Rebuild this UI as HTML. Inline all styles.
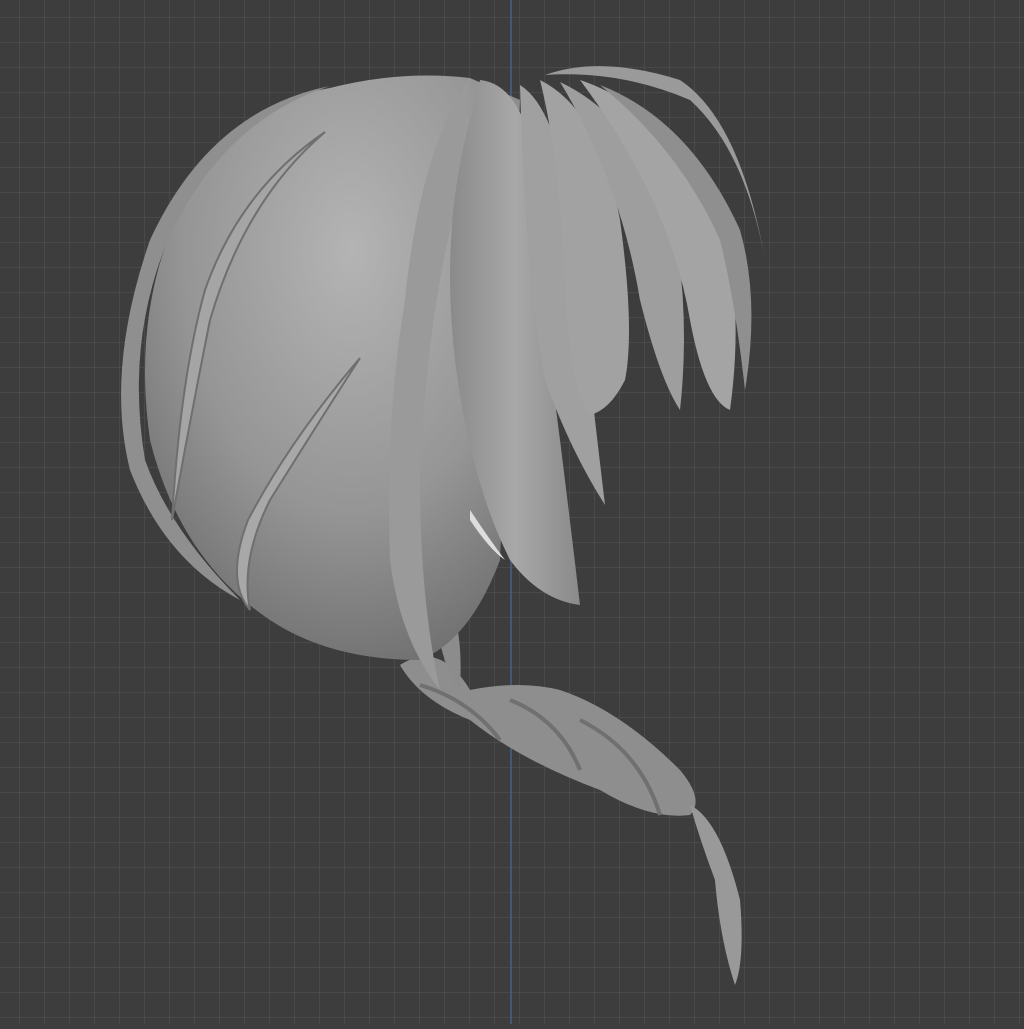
<!DOCTYPE html>
<html><head><style>html,body{margin:0;padding:0;background:#3d3d3d;overflow:hidden}</style></head>
<body>
<svg width="1024" height="1024" viewBox="0 0 1024 1024" xmlns="http://www.w3.org/2000/svg">
<defs>
<pattern id="g" x="19" y="17" width="25" height="25" patternUnits="userSpaceOnUse">
<rect width="25" height="25" fill="#3d3d3d"/>
<path d="M0 0H25M0 0V25" stroke="#4d4d4d" stroke-width="1.5"/>
</pattern>
<radialGradient id="h" cx="0.55" cy="0.3" r="0.75">
<stop offset="0" stop-color="#b4b4b4"/><stop offset="0.6" stop-color="#959595"/><stop offset="1" stop-color="#6e6e6e"/>
</radialGradient>
<linearGradient id="b" x1="0" y1="0" x2="1" y2="0">
<stop offset="0" stop-color="#8a8a8a"/><stop offset="0.5" stop-color="#a8a8a8"/><stop offset="1" stop-color="#8a8a8a"/>
</linearGradient>
</defs>
<rect width="1024" height="1024" fill="url(#g)"/>
<line x1="511" y1="0" x2="511" y2="1024" stroke="#4a5f86" stroke-width="1.5"/>
<!-- braid -->
<path d="M400 665 Q440 640 470 690 Q520 680 560 690 Q620 710 680 770 Q705 800 690 815 Q650 820 600 790 Q520 760 470 720 Q420 700 400 665Z" fill="#8e8e8e"/>
<path d="M420 685 Q470 700 500 740 M510 700 Q560 720 580 770 M580 720 Q640 750 660 815" stroke="#707070" stroke-width="4" fill="none"/>
<path d="M690 805 Q720 820 740 900 Q745 960 735 985 Q720 940 715 880 Q700 840 690 805Z" fill="#999"/>
<path d="M430 580 Q465 600 460 690 Q440 670 430 580Z" fill="#8c8c8c"/>
<!-- head -->
<path d="M330 88 Q400 70 470 78 L520 100 L500 560 Q470 640 420 660 Q330 660 270 620 Q180 560 150 440 Q130 300 190 190 Q250 100 330 88Z" fill="url(#h)"/>
<!-- outer strands -->
<path d="M330 86 Q210 110 150 240 Q105 370 130 470 Q165 560 240 600 Q170 530 145 460 Q125 340 170 235 Q225 120 330 86Z" fill="#8f8f8f"/>
<path d="M325 132 Q240 190 205 290 Q180 380 172 520 Q190 420 210 320 Q245 200 325 132Z" fill="#a5a5a5" stroke="#6f6f6f" stroke-width="2"/>
<path d="M360 358 Q290 440 248 520 Q225 580 250 610 Q240 560 270 500 Q320 420 360 358Z" fill="#a8a8a8" stroke="#6f6f6f" stroke-width="2"/>
<!-- bangs -->
<path d="M470 78 Q420 150 405 300 Q385 420 390 560 Q400 640 440 690 Q420 600 420 480 Q425 330 455 210Z" fill="#9a9a9a"/>
<path d="M480 80 Q530 85 540 200 Q545 330 560 440 Q570 520 580 605 Q540 600 510 560 Q470 480 455 360 Q440 230 470 120Z" fill="url(#b)"/>
<path d="M520 85 Q560 110 575 240 Q590 380 605 505 Q570 450 545 380 Q525 270 520 85Z" fill="#a0a0a0"/>
<path d="M540 80 Q600 110 620 220 Q635 330 625 380 Q610 410 590 415 Q570 390 565 290 Q560 160 540 80Z" fill="#a2a2a2"/>
<path d="M560 82 Q640 120 675 230 Q690 320 680 410 Q660 380 640 300 Q620 180 560 82Z" fill="#9e9e9e"/>
<path d="M580 80 Q670 110 720 220 Q745 300 730 410 Q705 400 690 320 Q670 200 580 80Z" fill="#a4a4a4"/>
<path d="M600 85 Q690 120 740 230 Q760 300 745 390 Q735 300 720 240 Q680 150 600 85Z" fill="#8f8f8f"/>
<path d="M545 75 Q600 55 680 80 Q740 120 765 260 Q745 150 690 100 Q620 70 545 75Z" fill="#9a9a9a"/>
<path d="M470 510 Q490 540 505 560 Q490 550 470 520Z" fill="#ddd"/>
</svg>
</body></html>
